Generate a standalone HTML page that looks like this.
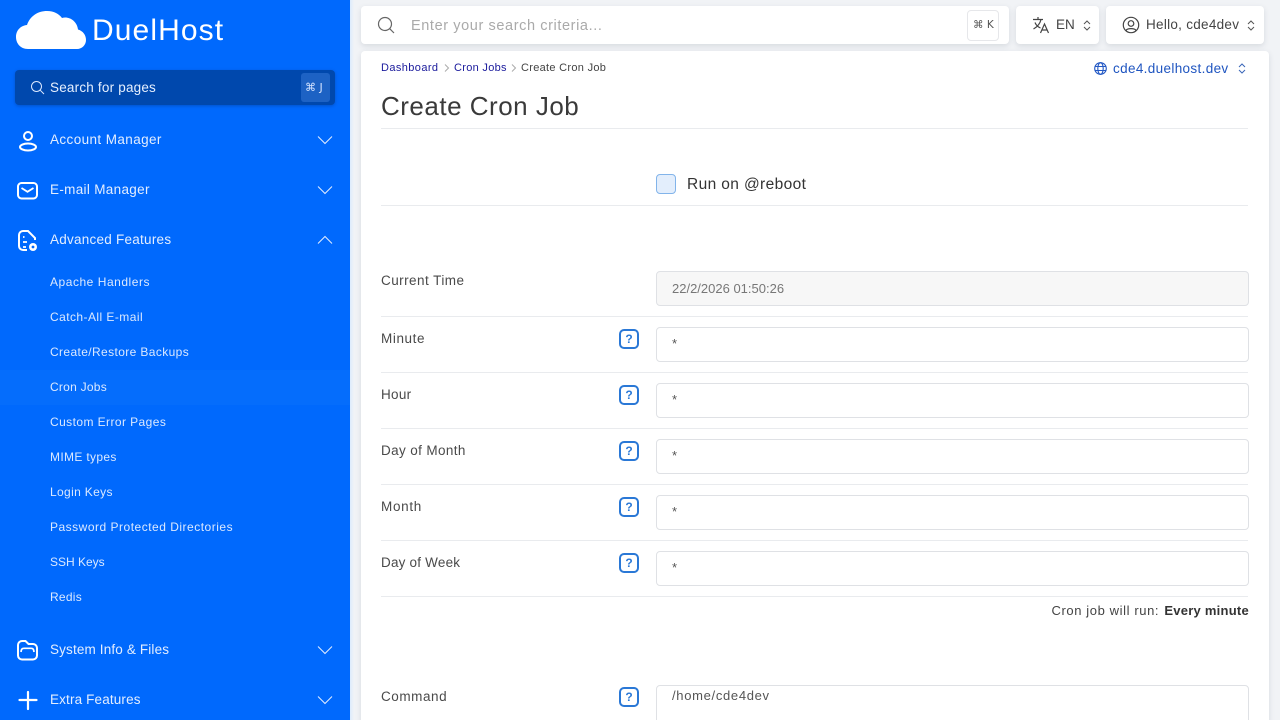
<!DOCTYPE html>
<html lang="en"><head><meta charset="utf-8"><title>Create Cron Job</title>
<style>
*{box-sizing:border-box}
html,body{margin:0;padding:0;width:1280px;height:720px;overflow:hidden;background:#f1f3f6;font-family:"Liberation Sans",sans-serif}
#page{position:absolute;left:0;top:0;width:1280px;height:720px;overflow:hidden;background:#f1f3f6}
.t{position:absolute;white-space:nowrap;line-height:1}
.abs,svg{position:absolute}
#side{position:absolute;left:0;top:0;width:350px;height:720px;background:#0069fd;overflow:hidden;z-index:2}
#edge{position:absolute;left:350px;top:0;width:4px;height:720px;background:linear-gradient(90deg,#dcebfd,#f1f3f6)}
.m{left:50px;font-size:13.5px;color:#e3eeff}
.s{left:50px;font-size:12px;color:#dbe9ff;letter-spacing:.4px}
.card{position:absolute;background:#fff;border-radius:4px;box-shadow:0 2px 6px rgba(60,70,90,.14)}
.l{position:absolute;left:381px;width:867px;height:1px;background:#e9ebee}
.lab{left:381px;font-size:13.5px;color:#4a4a4a}
.inp{position:absolute;left:656px;width:593px;height:35px;background:#fff;border:1px solid #dfe1e5;border-radius:4px}
.star{left:672px;font-size:13px;color:#555}
.q{position:absolute;left:619px;width:20px;height:20px;border:2px solid #2a78d6;border-radius:5px;color:#2a78d6;font-size:12px;font-weight:bold;text-align:center;line-height:16px}
</style></head><body>
<div id="page">
<div id="edge"></div>
<div id="side">
<svg style="left:0;top:0" width="100" height="60" viewBox="0 0 100 60" fill="#fff"><path d="M28 49C20 49 16 43 16 37 16 30 21 25.500 27 25 30 16 38 11 47 11 54 11 59 14 62 18 69 16 77 21 78 29.500 83 31 86 35 86 40 86 45 82 49 77 49Z"/></svg>
<div class="t" style="left:92px;top:16px;font-size:30px;color:#fff;letter-spacing:1.1px">DuelHost</div>
<div class="abs" style="left:15px;top:70px;width:320px;height:35px;background:#0048ad;border-radius:4px;box-shadow:0 1px 3px rgba(0,40,110,.35)"></div>
<svg style="left:30px;top:80px" width="15" height="15" viewBox="0 0 15 15" fill="none" stroke="#dbe8ff" stroke-width="1"><circle cx="6.500" cy="6.500" r="5"/><path d="M10.200 10.200L14 14"/></svg>
<div class="t m" style="top:81px;color:#e6f0ff;letter-spacing:.2px">Search for pages</div>
<div class="abs" style="left:301px;top:73px;width:29px;height:29px;background:#1d62c4;border-radius:3px"></div>
<div class="t" style="left:305px;top:82px;font-size:11px;color:#d5e4ff;font-family:'DejaVu Sans',sans-serif">⌘ J</div>

<svg style="left:16px;top:129px" width="24" height="24" viewBox="0 0 24 24" fill="none" stroke="#fff" stroke-width="2"><circle cx="12" cy="7" r="4"/><ellipse cx="12" cy="18" rx="8" ry="3.500"/></svg>
<div class="t m" style="top:133px;letter-spacing:.4px">Account Manager</div>
<svg style="left:317px;top:135px" width="16" height="10" viewBox="0 0 16 10" fill="none" stroke="#e4eeff" stroke-width="1"><path d="M1 1.500L8 8.500 15 1.500"/></svg>

<svg style="left:16px;top:180px" width="24" height="22" viewBox="0 0 24 22" fill="none" stroke="#fff" stroke-width="2"><rect x="2" y="3" width="19" height="15.500" rx="3.500"/><path d="M5.500 8l6 3.800 6-3.800" stroke-width="1.800"/></svg>
<div class="t m" style="top:183px;letter-spacing:.32px">E-mail Manager</div>
<svg style="left:317px;top:185px" width="16" height="10" viewBox="0 0 16 10" fill="none" stroke="#e4eeff" stroke-width="1"><path d="M1 1.500L8 8.500 15 1.500"/></svg>

<svg style="left:16px;top:229px" width="24" height="24" viewBox="0 0 24 24" fill="none" stroke="#fff" stroke-width="2"><path d="M11 21H7a4 4 0 0 1-4-4V6a4 4 0 0 1 4-4h5l7 7v2"/><path d="M7 8h1.500M7 13h4M7 18h3" stroke-width="1.700"/><circle cx="17" cy="18" r="4" fill="#fff" stroke="none"/><circle cx="17" cy="18" r="1.400" fill="#0069fd" stroke="none"/></svg>
<div class="t m" style="top:233px;letter-spacing:.25px">Advanced Features</div>
<svg style="left:317px;top:235px" width="16" height="10" viewBox="0 0 16 10" fill="none" stroke="#e4eeff" stroke-width="1"><path d="M1 8.500L8 1.500 15 8.500"/></svg>

<div class="t s" style="top:276px;letter-spacing:.53px">Apache Handlers</div>
<div class="t s" style="top:311px;letter-spacing:.44px">Catch-All E-mail</div>
<div class="t s" style="top:346px;letter-spacing:.38px">Create/Restore Backups</div>
<div class="abs" style="left:0;top:370px;width:350px;height:35px;background:#056dfc"></div>
<div class="t s" style="top:381px;letter-spacing:.25px">Cron Jobs</div>
<div class="t s" style="top:416px;letter-spacing:.42px">Custom Error Pages</div>
<div class="t s" style="top:451px;letter-spacing:.34px">MIME types</div>
<div class="t s" style="top:486px;letter-spacing:.35px">Login Keys</div>
<div class="t s" style="top:521px;letter-spacing:.5px">Password Protected Directories</div>
<div class="t s" style="top:556px;letter-spacing:0">SSH Keys</div>
<div class="t s" style="top:591px;letter-spacing:.26px">Redis</div>

<svg style="left:16px;top:639px" width="24" height="23" viewBox="0 0 24 23" fill="none" stroke="#fff" stroke-width="2"><path d="M2 6a4 4 0 0 1 4-4h3.500l3 3H17a4 4 0 0 1 4 4v7.500a4 4 0 0 1-4 4H6a4 4 0 0 1-4-4z"/><path d="M5 13c.3-3 1-3.700 3-3.700h7c2 0 2.700.7 3 3.700" stroke-width="1.700"/></svg>
<div class="t m" style="top:643px;letter-spacing:.15px">System Info &amp; Files</div>
<svg style="left:317px;top:645px" width="16" height="10" viewBox="0 0 16 10" fill="none" stroke="#e4eeff" stroke-width="1"><path d="M1 1.500L8 8.500 15 1.500"/></svg>

<svg style="left:16px;top:688px" width="24" height="24" viewBox="0 0 24 24" fill="none" stroke="#fff" stroke-width="2.200" stroke-linecap="round"><path d="M12 4v17M3.500 12h17"/></svg>
<div class="t m" style="top:693px;letter-spacing:.15px">Extra Features</div>
<svg style="left:317px;top:695px" width="16" height="10" viewBox="0 0 16 10" fill="none" stroke="#e4eeff" stroke-width="1"><path d="M1 1.500L8 8.500 15 1.500"/></svg>
</div>

<div class="card" style="left:361px;top:6px;width:648px;height:38px"></div>
<svg style="left:377px;top:16px" width="18" height="18" viewBox="0 0 18 18" fill="none" stroke="#666" stroke-width="1.200"><circle cx="8" cy="8" r="6.500"/><path d="M12.700 12.700L17 17"/></svg>
<div class="t" style="left:411px;top:19px;font-size:14.500px;color:#aaa;letter-spacing:.6px">Enter your search criteria...</div>
<div class="abs" style="left:967px;top:10px;width:32px;height:31px;border:1px solid #e6e7ea;border-radius:4px"></div>
<div class="t" style="left:973px;top:20px;font-size:10.500px;color:#555;font-family:'DejaVu Sans',sans-serif">⌘ K</div>

<div class="card" style="left:1016px;top:6px;width:83px;height:38px"></div>
<svg style="left:1032px;top:16px" width="18" height="18" viewBox="0 0 18 18" fill="none" stroke="#444" stroke-width="1.200"><path d="M1 3.500h10M6 1v2.500M9 3.500C8 8 5 11 1.500 13M3 6.500c1 2.500 3 4.500 5.500 5.500M8.500 17l4-9 4 9M10 14h5"/></svg>
<div class="t" style="left:1056px;top:18px;font-size:13.500px;color:#444">EN</div>
<svg style="left:1083px;top:20px" width="8" height="11" viewBox="0 0 8 11" fill="none" stroke="#555"><path d="M1 4l3-3 3 3M1 7l3 3 3-3"/></svg>

<div class="card" style="left:1106px;top:6px;width:158px;height:38px"></div>
<svg style="left:1122px;top:16px" width="18" height="18" viewBox="0 0 18 18" fill="none" stroke="#444" stroke-width="1.200"><circle cx="9" cy="9" r="7.700"/><circle cx="9" cy="7.500" r="2.800"/><path d="M4 14.500c1-2.500 9-2.500 10 0"/></svg>
<div class="t" style="left:1146px;top:18px;font-size:13.500px;color:#444;letter-spacing:.28px">Hello, cde4dev</div>
<svg style="left:1247px;top:20px" width="8" height="11" viewBox="0 0 8 11" fill="none" stroke="#555"><path d="M1 4l3-3 3 3M1 7l3 3 3-3"/></svg>

<div class="card" style="left:361px;top:51px;width:908px;height:675px"></div>
<div class="t" style="left:381px;top:63px;font-size:11px;color:#1a1a9c;letter-spacing:.4px">Dashboard</div>
<svg style="left:444px;top:64px" width="6" height="8" viewBox="0 0 6 8" fill="none" stroke="#aaa"><path d="M1 .5L4.500 4 1 7.500"/></svg>
<div class="t" style="left:454px;top:63px;font-size:11px;color:#1a1a9c;letter-spacing:.3px">Cron Jobs</div>
<svg style="left:511px;top:64px" width="6" height="8" viewBox="0 0 6 8" fill="none" stroke="#aaa"><path d="M1 .5L4.500 4 1 7.500"/></svg>
<div class="t" style="left:521px;top:63px;font-size:11px;color:#444;letter-spacing:.3px">Create Cron Job</div>
<svg style="left:1094px;top:62px" width="13" height="13" viewBox="0 0 13 13" fill="none" stroke="#2459c4" stroke-width="1.100"><circle cx="6.500" cy="6.500" r="5.800"/><ellipse cx="6.500" cy="6.500" rx="2.700" ry="5.800"/><path d="M1 4.500h11M1 8.500h11"/></svg>
<div class="t" style="left:1113px;top:62px;font-size:13.500px;color:#1f55c0;letter-spacing:.35px">cde4.duelhost.dev</div>
<svg style="left:1238px;top:63px" width="8" height="11" viewBox="0 0 8 11" fill="none" stroke="#3a66b8"><path d="M1 4l3-3 3 3M1 7l3 3 3-3"/></svg>

<div class="t" style="left:381px;top:93px;font-size:26px;color:#3a3a3a;letter-spacing:.5px">Create Cron Job</div>
<div class="l" style="top:128px"></div>

<div class="abs" style="left:656px;top:174px;width:20px;height:20px;background:#e3eefc;border:1px solid #82b4ea;border-radius:4px"></div>
<div class="t" style="left:687px;top:177px;font-size:15.500px;color:#333;letter-spacing:.38px">Run on @reboot</div>
<div class="l" style="top:205px"></div>

<div class="t lab" style="top:274px;letter-spacing:.45px">Current Time</div>
<div class="inp" style="top:271px;background:#f7f7f7"></div>
<div class="t" style="left:672px;top:282px;font-size:13px;color:#777">22/2/2026 01:50:26</div>
<div class="l" style="top:316px"></div>

<div class="t lab" style="top:332px;letter-spacing:.6px">Minute</div><div class="q" style="top:329px">?</div><div class="inp" style="top:327px"></div><div class="t star" style="top:337px">*</div>
<div class="l" style="top:372px"></div>
<div class="t lab" style="top:388px;letter-spacing:.3px">Hour</div><div class="q" style="top:385px">?</div><div class="inp" style="top:383px"></div><div class="t star" style="top:393px">*</div>
<div class="l" style="top:428px"></div>
<div class="t lab" style="top:444px;letter-spacing:.37px">Day of Month</div><div class="q" style="top:441px">?</div><div class="inp" style="top:439px"></div><div class="t star" style="top:449px">*</div>
<div class="l" style="top:484px"></div>
<div class="t lab" style="top:500px;letter-spacing:.7px">Month</div><div class="q" style="top:497px">?</div><div class="inp" style="top:495px"></div><div class="t star" style="top:505px">*</div>
<div class="l" style="top:540px"></div>
<div class="t lab" style="top:556px;letter-spacing:.2px">Day of Week</div><div class="q" style="top:553px">?</div><div class="inp" style="top:551px"></div><div class="t star" style="top:561px">*</div>
<div class="l" style="top:596px"></div>

<div class="t" style="right:31px;top:604px;font-size:13px;color:#444;letter-spacing:.6px">Cron job will run: <b style="color:#333;margin-left:1px;letter-spacing:.25px">Every minute</b></div>

<div class="t lab" style="top:690px;letter-spacing:.55px">Command</div><div class="q" style="top:687px">?</div>
<div class="inp" style="top:685px;height:60px"></div>
<div class="t" style="left:672px;top:689px;font-size:13px;color:#555;letter-spacing:.68px">/home/cde4dev</div>
</div>
</body></html>
